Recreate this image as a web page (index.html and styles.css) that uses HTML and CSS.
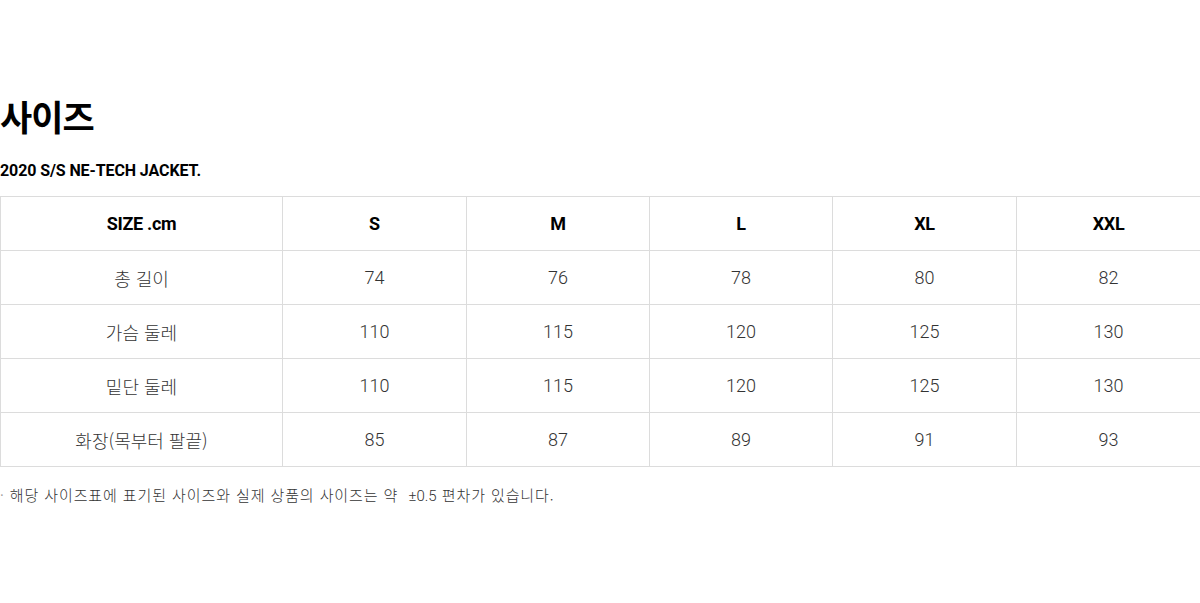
FILE: index.html
```html
<!DOCTYPE html>
<html lang="ko">
<head>
<meta charset="utf-8">
<link rel="stylesheet" href="styles.css">
</head>
<body>
<div class="page">
  <h1 class="title">사이즈</h1>
  <p class="subtitle">2020 S/S NE-TECH JACKET.</p>
  <table class="size-table">
    <colgroup>
      <col class="c0"><col class="c1"><col class="c2"><col class="c3"><col class="c4"><col class="c5">
    </colgroup>
    <thead>
      <tr><th>SIZE .cm</th><th>S</th><th>M</th><th>L</th><th>XL</th><th>XXL</th></tr>
    </thead>
    <tbody>
      <tr><td class="label">총 길이</td><td>74</td><td>76</td><td>78</td><td>80</td><td>82</td></tr>
      <tr><td class="label">가슴 둘레</td><td>110</td><td>115</td><td>120</td><td>125</td><td>130</td></tr>
      <tr><td class="label">밑단 둘레</td><td>110</td><td>115</td><td>120</td><td>125</td><td>130</td></tr>
      <tr><td class="label">화장(목부터 팔끝)</td><td>85</td><td>87</td><td>89</td><td>91</td><td>93</td></tr>
    </tbody>
  </table>
  <p class="note"><span class="dot">·</span> 해당 사이즈표에 표기된 사이즈와 실제 상품의 사이즈는 약 &nbsp;<span class="num">±0.5</span> 편차가 있습니다.</p>
</div>
</body>
</html>
```
FILE: styles.css
```css
html, body {
  margin: 0;
  padding: 0;
  background: #fff;
}
body {
  font-family: Roboto, "Noto Sans CJK KR", sans-serif;
  color: #111;
}
.page {
  padding-top: 94px;
  width: 1200px;
}
.title {
  margin: 0;
  font-family: "Noto Sans CJK KR", sans-serif;
  font-weight: 700;
  font-size: 35px;
  line-height: 44px;
  color: #000;
  letter-spacing: -1px;
}
.subtitle {
  margin: 23px 0 0 0;
  font-family: Roboto, sans-serif;
  font-weight: 700;
  font-size: 16px;
  line-height: 20px;
  letter-spacing: -0.1px;
  color: #000;
}
.size-table {
  margin-top: 15px;
  width: 1200px;
  border-collapse: collapse;
  table-layout: fixed;
}
.c0 { width: 282px; }
.c1 { width: 184px; }
.c2 { width: 183px; }
.c3 { width: 183px; }
.c4 { width: 184px; }
.c5 { width: 184px; }
.size-table th,
.size-table td {
  border: 1px solid #dcdcdc;
  height: 53px;
  padding: 0;
  text-align: center;
  vertical-align: middle;
}
.size-table th {
  font-family: Roboto, sans-serif;
  font-weight: 700;
  font-size: 18px;
  letter-spacing: -0.3px;
  color: #000;
}
.size-table td {
  font-family: Roboto, sans-serif;
  font-weight: 300;
  font-size: 18px;
  color: #333;
}
.size-table td.label {
  font-family: "Noto Sans CJK KR", sans-serif;
  font-weight: 300;
  font-size: 18px;
  color: #333;
}
.note {
  margin: 19px 0 0 0;
  font-family: "Noto Sans CJK KR", sans-serif;
  font-weight: 300;
  font-size: 15px;
  line-height: 18px;
  letter-spacing: 0.9px;
  color: #333;
}
.note .dot {
  color: #999;
}
.note .num {
  font-family: Roboto, sans-serif;
  font-weight: 300;
  letter-spacing: 0;
}
```
